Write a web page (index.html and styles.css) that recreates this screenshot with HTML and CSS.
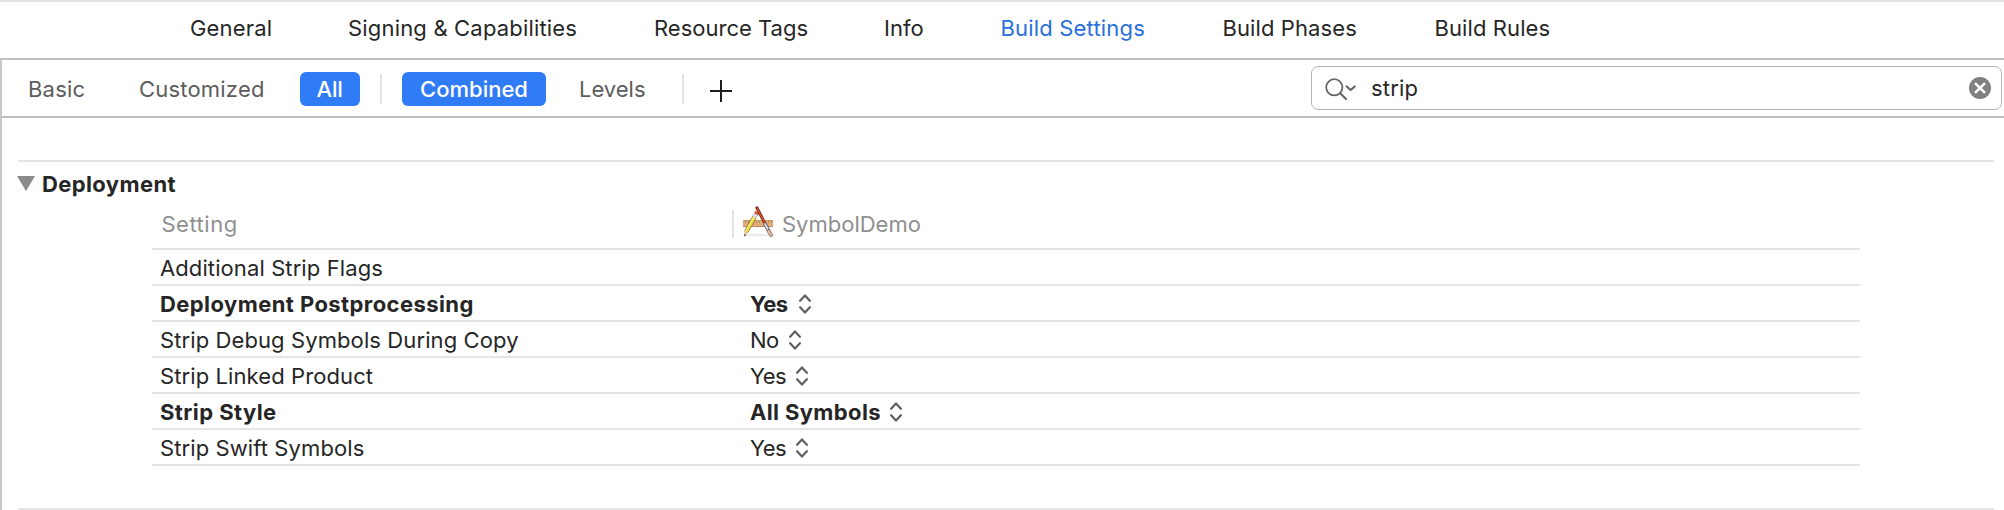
FILE: index.html
```html
<!DOCTYPE html>
<html lang="en">
<head>
<meta charset="utf-8">
<title>Build Settings</title>
<link rel="stylesheet" href="styles.css">
</head>
<body>
<svg class="defs" width="0" height="0" aria-hidden="true">
  <symbol id="updown" viewBox="0 0 12 20">
    <path d="M1.1 6.8 6 1.4 10.9 6.8M1.1 13.2 6 18.6 10.9 13.2" fill="none" stroke="#606060" stroke-width="2.2" stroke-linecap="round" stroke-linejoin="round"/>
  </symbol>
</svg>
<nav class="tabs">
  <a class="tab">General</a>
  <a class="tab">Signing &amp; Capabilities</a>
  <a class="tab tight">Resource Tags</a>
  <a class="tab tight">Info</a>
  <a class="tab active">Build Settings</a>
  <a class="tab snug">Build Phases</a>
  <a class="tab snug">Build Rules</a>
</nav>
<div class="editor">
  <div class="toolbar">
    <div class="basic">Basic</div>
    <div class="customized">Customized</div>
    <div class="pill all">All</div>
    <div class="divider"></div>
    <div class="pill combined">Combined</div>
    <div class="levels">Levels</div>
    <div class="divider"></div>
    <svg class="plus" width="22" height="22" viewBox="0 0 22 22"><path d="M11 0V22M0 11H22" stroke="#1f1f1f" stroke-width="2"/></svg>
    <div class="search">
      <svg class="magnifier" width="32" height="24" viewBox="0 0 32 24" fill="none" stroke="#666" stroke-linecap="round">
        <circle cx="9.3" cy="10.3" r="8.1" stroke-width="1.8"/>
        <path d="M15.2 16.2 21 22" stroke-width="2"/>
        <path d="M21.7 9.5 25.7 13 29.7 9.5" stroke-width="2.2" stroke-linejoin="round"/>
      </svg>
      <span class="query">strip</span>
      <svg class="clear" width="22" height="22" viewBox="0 0 22 22"><circle cx="11" cy="11" r="11" fill="#808080"/><path d="M6.8 6.8 15.2 15.2M15.2 6.8 6.8 15.2" stroke="#fff" stroke-width="2.6" stroke-linecap="round"/></svg>
    </div>
  </div>
  <section class="group">
    <h2 class="title"><svg width="18" height="15" viewBox="0 0 18 15"><path d="M0 0H18L9 15Z" fill="#8a8a8a"/></svg><span>Deployment</span></h2>
    <div class="table">
      <div class="head">
        <div class="setting">Setting</div>
        <div class="target">
          <svg class="app" width="30" height="32" viewBox="0 0 30 32">
            <ellipse cx="15" cy="29" rx="14" ry="1.4" fill="#ececec"/>
            <rect x="0" y="14" width="30" height="7" fill="#dfad7c"/>
            <path d="M0 14.5H30" stroke="#cd9866"/>
            <path d="M0 20.5H30" stroke="#c48b5d"/>
            <path d="M2.5 15v2M5.5 15v2M8.5 15v2M13.5 15v2M16.5 15v2M22.5 15v2M25.5 15v2M28.5 15v2" stroke="#b98555"/>
            <path d="M14 6.5 3.2 25.8" stroke="#6d6233" stroke-width="4.4"/>
            <path d="M12.8 8.6 3.2 25.8" stroke="#f3dc3e" stroke-width="3.2"/>
            <path d="M12.4 8.2 2.9 25" stroke="#fff28a" stroke-width="1"/>
            <path d="M14.4 6 13.2 8" stroke="#e8524a" stroke-width="4.4"/>
            <path d="M13.1 8.1 11.4 11.1" stroke="#d7dcec" stroke-width="4.2"/>
            <path d="M1.4 24.7 5.2 26.8 1.4 30.5Z" fill="#e7c695"/>
            <path d="M1.6 28 3 28.9 1.2 30.8Z" fill="#222"/>
            <path d="M13.9 1.8 22.2 18" stroke="#7e2d18" stroke-width="3" stroke-linecap="round"/>
            <path d="M14.3 2.6 22 17.5" stroke="#cf5428" stroke-width="1.5" stroke-linecap="round"/>
            <path d="M21.8 17.4 25.8 25" stroke="#5c6070" stroke-width="3.6"/>
            <path d="M21.7 17.4 25.7 25" stroke="#dfe2ea" stroke-width="1.8"/>
            <path d="M25.7 25 28 29.2" stroke="#987063" stroke-width="3.8" stroke-linecap="round"/>
            <path d="M25.7 25.2 27.8 29" stroke="#e3b8a5" stroke-width="2.3" stroke-linecap="round"/>
          </svg>
          <span>SymbolDemo</span>
        </div>
      </div>
      <div class="row"><div class="name">Additional Strip Flags</div></div>
      <div class="row bold"><div class="name">Deployment Postprocessing</div><div class="value yes">Yes<svg class="ud"><use href="#updown"/></svg></div></div>
      <div class="row"><div class="name">Strip Debug Symbols During Copy</div><div class="value no">No<svg class="ud"><use href="#updown"/></svg></div></div>
      <div class="row"><div class="name">Strip Linked Product</div><div class="value yes">Yes<svg class="ud"><use href="#updown"/></svg></div></div>
      <div class="row bold"><div class="name">Strip Style</div><div class="value symbols">All Symbols<svg class="ud"><use href="#updown"/></svg></div></div>
      <div class="row"><div class="name">Strip Swift Symbols</div><div class="value yes">Yes<svg class="ud"><use href="#updown"/></svg></div></div>
    </div>
  </section>
  <div class="next-group"></div>
</div>
</body>
</html>
```
FILE: styles.css
```css
* { box-sizing: border-box; }

body {
  margin: 0;
  height: 510px;
  overflow: hidden;
  background: #fff;
  color: #262626;
  font: 22px/34px Inter, "Liberation Sans", sans-serif;
}

.defs { display: none; }

.tabs {
  display: grid;
  grid-template-columns: 158px 306px 230px 116.5px 222px 212px auto;
  height: 58px;
  padding: 9px 0 0 190px;
  border-top: 2px solid #e5e5e5;
  letter-spacing: 0.18px;
}
.tab { white-space: nowrap; }
.tight { letter-spacing: 0; }
.snug { letter-spacing: 0.1px; }
.active { color: #2a6fdb; }

.editor {
  height: 452px;
  border-top: 2px solid #bfbfbf;
  border-left: 2px solid #c8c8c8;
}

.toolbar {
  display: flex;
  align-items: center;
  height: 58px;
  padding: 2px 2px 0 26px;
  border-bottom: 2px solid #bfbfbf;
  color: #5c5c5c;
}
.basic { width: 111px; letter-spacing: 0.2px; }
.customized { width: 161px; letter-spacing: 0.2px; }
.pill {
  height: 34px;
  border-radius: 6px;
  background: #2f7cf6;
  color: #fff;
  font-weight: 500;
  text-align: center;
}
.all { width: 60px; padding-right: 1px; letter-spacing: -0.3px; }
.combined { width: 144px; margin-left: 20px; }
.levels { width: 103px; margin-left: 33px; }
.divider { width: 2px; height: 30px; background: #e3e3e3; }
.all + .divider { margin-left: 20px; }
.plus { margin: 4px 0 0 26px; }

.search {
  display: flex;
  align-items: center;
  width: 691px;
  height: 44px;
  margin: -2px 0 0 auto;
  padding: 0 10px 0 13px;
  border: 1.5px solid #b4b4b4;
  border-radius: 7px;
}
.magnifier { margin-top: 1px; }
.query { margin-left: 14px; color: #262626; letter-spacing: 0.18px; }
.clear { margin-left: auto; }

.group {
  height: 348px;
  margin: 42px 10px 0 16px;
  border-top: 2px solid #e5e5e5;
}
.title {
  display: flex;
  align-items: center;
  gap: 7px;
  height: 34px;
  margin: 5px 0 0 -1px;
  font-size: 22px;
  font-weight: 700;
  letter-spacing: 0.38px;
}
.title svg { margin-top: -1px; }

.table { width: 1708px; margin-left: 134px; }
.head {
  display: flex;
  height: 49px;
  padding-top: 6px;
  border-bottom: 2px solid #e5e5e5;
  color: #8f8f8f;
}
.setting { width: 580px; padding-left: 9.5px; letter-spacing: 0.5px; }
.target {
  display: flex;
  align-items: center;
  gap: 9px;
  height: 34px;
}
.target::before {
  content: "";
  width: 2px;
  height: 28px;
  background: #e3e3e3;
}
.app { margin-top: -4px; }

.row {
  display: flex;
  height: 36px;
  padding: 1px 0 0 8px;
  border-bottom: 2px solid #e5e5e5;
  letter-spacing: 0.1px;
}
.name { width: 590px; }
.bold { font-weight: 700; letter-spacing: 0.42px; }
.value { display: flex; }
.yes { letter-spacing: -0.5px; }
.no { letter-spacing: -0.5px; }
.symbols { letter-spacing: 0.36px; }
.ud { width: 12px; height: 20px; margin: 7px 0 0 10px; }
.bold .yes .ud { margin-left: 11px; }
.symbols .ud { margin-left: 9px; }

.next-group {
  height: 2px;
  margin: 0 10px 0 16px;
  background: #e5e5e5;
}
```
